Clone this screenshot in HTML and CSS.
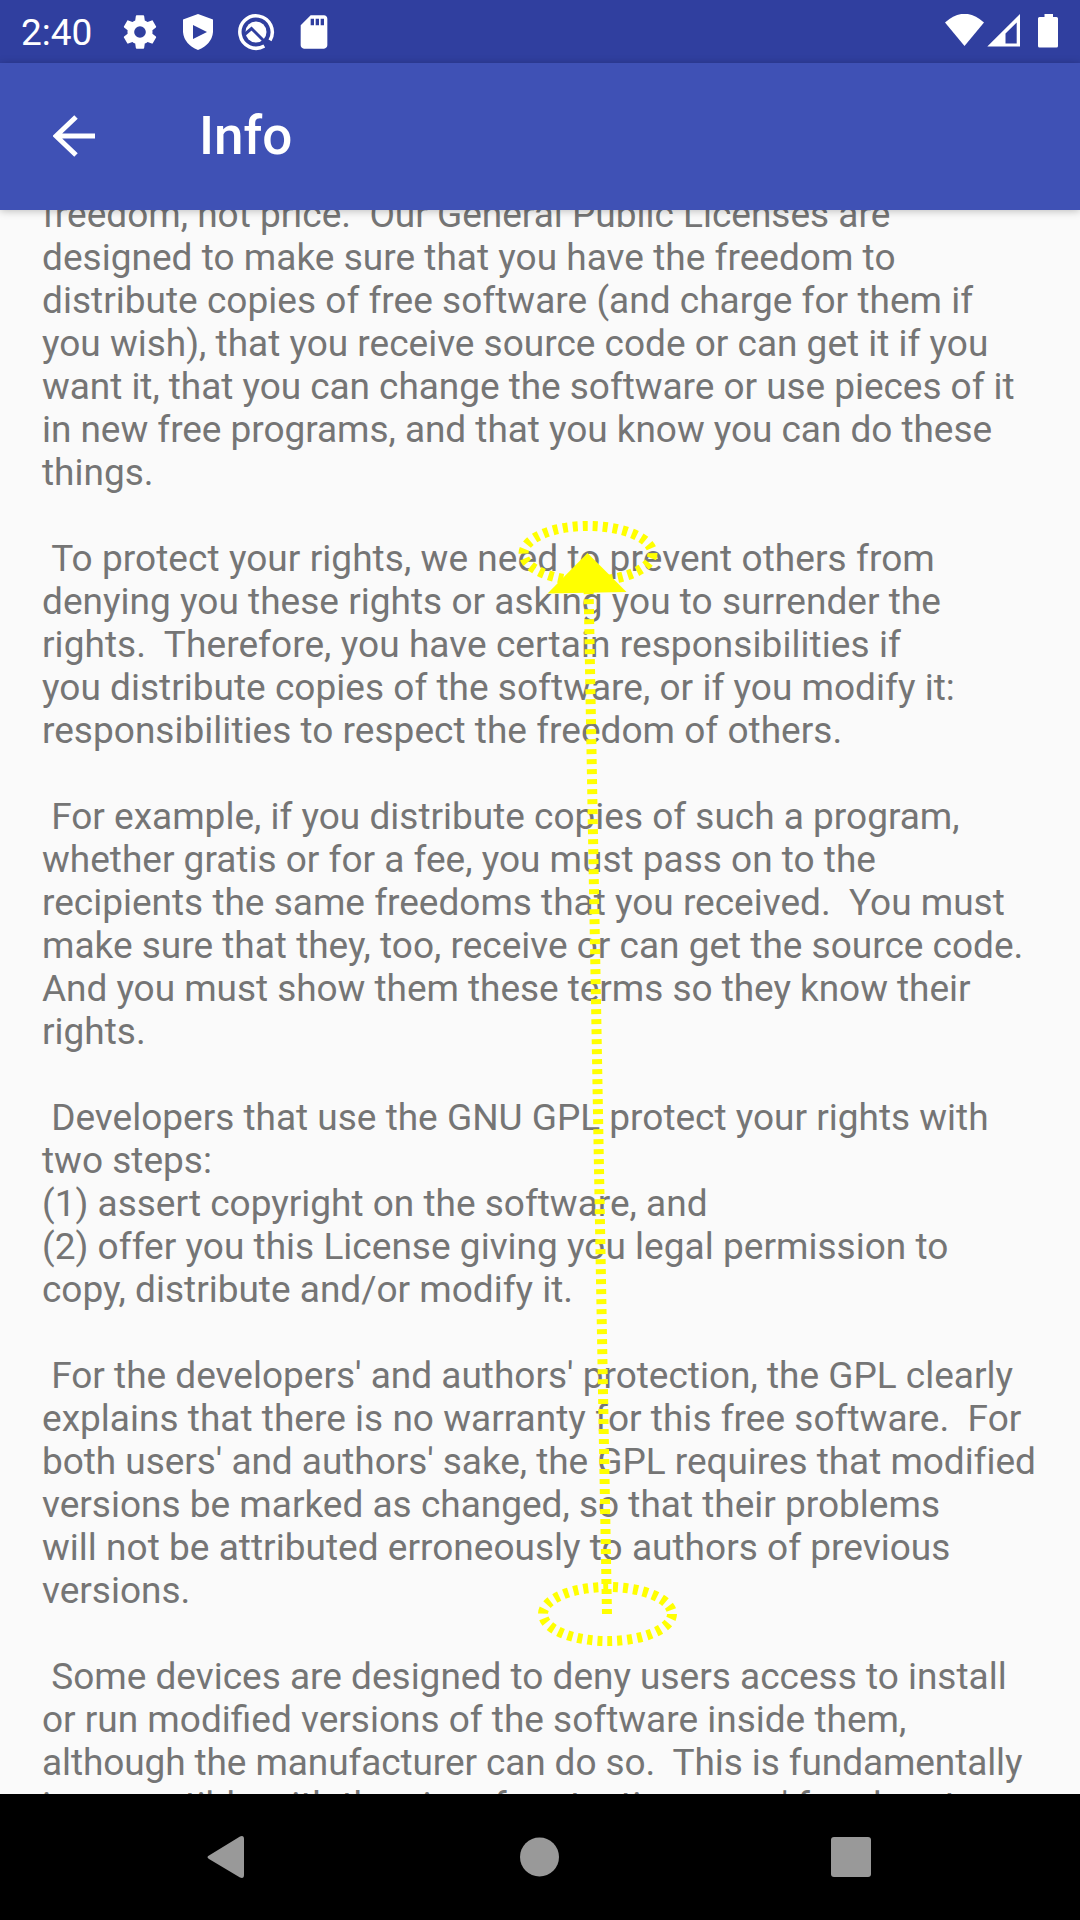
FILE: index.html
```html
<!DOCTYPE html>
<html lang="en">
<head>
<meta charset="utf-8">
<title>Info</title>
<link rel="stylesheet" href="styles.css">
</head>
<body>
<div class="screen">
<header class="status-bar">
  <span class="clock">2:40</span>
  <div class="notifications">
    <svg class="icon" viewBox="0 0 24 24"><path d="M19.43 12.98c.04-.32.07-.64.07-.98s-.03-.66-.07-.98l2.11-1.65c.19-.15.24-.42.12-.64l-2-3.46c-.12-.22-.39-.3-.61-.22l-2.49 1c-.52-.4-1.08-.73-1.69-.98l-.38-2.65C14.46 2.18 14.25 2 14 2h-4c-.25 0-.46.18-.49.42l-.38 2.65c-.61.25-1.17.59-1.69.98l-2.49-1c-.23-.09-.49 0-.61.22l-2 3.46c-.13.22-.07.49.12.64l2.11 1.65c-.04.32-.07.65-.07.98s.03.66.07.98l-2.11 1.65c-.19.15-.24.42-.12.64l2 3.46c.12.22.39.3.61.22l2.49-1c.52.4 1.08.73 1.69.98l.38 2.65c.03.24.24.42.49.42h4c.25 0 .46-.18.49-.42l.38-2.65c.61-.25 1.17-.59 1.69-.98l2.49 1c.23.09.49 0 .61-.22l2-3.46c.12-.22.07-.49-.12-.64zM12 15.5A3.5 3.5 0 1 1 12 8.500a3.5 3.5 0 0 1 0 7z"/></svg>
    <svg class="icon" viewBox="0 0 40 40"><path fill-rule="evenodd" d="M20 2 35 7.500V20Q34 32 20 38 6 32 5 20V7.500zM15 13v14l14-7z"/></svg>
    <svg class="icon" viewBox="0 0 40 40"><path class="ring" d="M28.300 34A16.200 16.200 0 1 1 34 28.300"/><circle cx="20" cy="20" r="10.500"/><path class="cut" d="M8.500 22.500 15.500 16.500 31 32"/></svg>
    <svg class="icon" viewBox="0 0 24 24"><path d="M18 2h-8L4.020 8 4 20c0 1.100.9 2 2 2h12c1.100 0 2-.9 2-2V4c0-1.100-.9-2-2-2zm-6 6h-2V4h2v4zm3 0h-2V4h2v4zm3 0h-2V4h2v4z"/></svg>
  </div>
  <svg class="system" viewBox="0 0 116 40"><path d="M0 8.500Q19.500-9 39 8.500L19.500 32z"/><path fill-rule="evenodd" d="M42.300 32.500 75 0V32.500zM60.500 29.500H71.700V8.500L60.500 19.500z"/><path d="M99.500 0h8.500v3h3.500q1.500 0 1.500 1.500v27.500q0 1.500-1.500 1.500h-17q-1.500 0-1.500-1.500V4.500q0-1.500 1.500-1.500h5z"/></svg>
</header>
<nav class="app-bar">
  <svg class="back" viewBox="0 0 42 42"><path d="M23 2 3 21 23 40M3 21H42"/></svg>
  <h1 class="title">Info</h1>
</nav>
<main class="content">
<pre class="license">freedom, not price.  Our General Public Licenses are
<span class="loose">designed to make sure that you have the freedom to
distribute copies of free software (and charge for them if</span>
you wish), that you receive source code or can get it if you
<span class="tight">want it, that you can change the software or use pieces of it
in new free programs, and that you know you can do these</span>
things.

 <span class="looser">To protect your rights, we need to prevent others from</span>
<span class="loose">denying you these rights or asking you to surrender the</span>
<span class="looser">rights.  Therefore, you have certain responsibilities if</span>
<span class="loose">you distribute copies of the software, or if you modify it:
responsibilities to respect the freedom of others.</span>

 For example, if you distribute copies of such a program,
whether gratis or for a fee, you must pass on to the
recipients the same freedoms that you received.  You must
make sure that they, too, receive or can get the source code.
<span class="tight">And you must show them these terms so they know their</span>
rights.

 Developers that use the GNU GPL protect your rights with
two steps:
(1) assert copyright on the software, and
<span class="loose">(2) offer you this License giving you legal permission to</span>
copy, distribute and/or modify it.

 For the developers' and authors' protection, the GPL clearly
<span class="loose">explains that there is no warranty for this free software.  For</span>
<span class="tight">both users' and authors' sake, the GPL requires that modified</span>
versions be marked as changed, so that their problems
<span class="loose">will not be attributed erroneously to authors of previous</span>
versions.

 Some devices are designed to deny users access to install
or run modified versions of the software inside them,
<span class="tighter">although the manufacturer can do so.  This is fundamentally
incompatible with the aim of protecting users' freedom to</span></pre>
</main>
<footer class="nav-bar">
  <svg class="nav-icon" viewBox="0 0 44 44"><path d="M5 20.500 36 1.500Q40 0 40 4V40Q40 44 36 42.500L5 24Q2 22 5 20.500z"/></svg>
  <svg class="nav-icon" viewBox="0 0 44 44"><circle cx="22.500" cy="22" r="19.500"/></svg>
  <svg class="nav-icon" viewBox="0 0 44 44"><rect x="2" y="2" width="40" height="40" rx="3"/></svg>
</footer>
<svg class="gesture" viewBox="0 0 1080 1920">
  <ellipse cx="588" cy="553.500" rx="64.500" ry="27.500"/>
  <ellipse cx="607.500" cy="1614" rx="64.500" ry="27"/>
  <path d="M607 1614 588 556"/>
  <path class="head" d="M587.500 553 626.500 592 547.500 593.500z"/>
</svg>
</div>
</body>
</html>
```
FILE: styles.css
```css
body { margin: 0; }

.screen {
  position: relative;
  display: flex;
  flex-direction: column;
  width: 1080px;
  height: 1920px;
  overflow: hidden;
  background: #fafafa;
  font-family: Roboto, sans-serif;
}

.status-bar {
  display: flex;
  align-items: center;
  flex: 0 0 63px;
  box-sizing: border-box;
  padding: 0 19px 0 21px;
  background: #303f9f;
  color: #fff;
  z-index: 1;
}

.clock { width: 99px; font-size: 37px; line-height: 60px; padding-top: 3px; }
.notifications { display: flex; gap: 18px; }
.icon { width: 40px; height: 40px; fill: #fff; }
.ring { fill: none; stroke: #fff; stroke-width: 3.500; }
.cut { fill: none; stroke: #303f9f; stroke-width: 3; }
.system { width: 116px; height: 40px; margin: 5px 0 0 auto; fill: #fff; }

.app-bar {
  display: flex;
  align-items: center;
  flex: 0 0 147px;
  box-sizing: border-box;
  padding: 0 53px 2px;
  background: #3f51b5;
  box-shadow: 0 1px 8px rgba(0, 0, 0, .25);
  color: #fff;
  z-index: 1;
}

.back { width: 42px; height: 42px; fill: none; stroke: #fff; stroke-width: 5; }
.title { margin: 0 0 0 104px; font-size: 53px; font-weight: 500; line-height: 62px; }

.content { flex: 1; min-height: 0; overflow: hidden; }
.license {
  margin: -17px 0 0;
  padding-left: 42px;
  color: #757575;
  font: 37px/43px Roboto, sans-serif;
  font-variant-ligatures: common-ligatures;
}
.loose { letter-spacing: .025px; }
.looser { letter-spacing: .065px; }
.tight { letter-spacing: -.045px; }
.tighter { letter-spacing: -.1px; }

.nav-bar {
  display: flex;
  align-items: center;
  justify-content: space-between;
  flex: 0 0 126px;
  box-sizing: border-box;
  padding: 0 207px 0 204px;
  background: #000;
}
.nav-icon { width: 44px; height: 44px; fill: #999; }

.gesture {
  position: absolute;
  inset: 0;
  width: 1080px;
  height: 1920px;
  fill: none;
  stroke: #ff0;
  stroke-width: 10;
  stroke-dasharray: 5 5;
}
.head { fill: #ff0; stroke: none; }
```
